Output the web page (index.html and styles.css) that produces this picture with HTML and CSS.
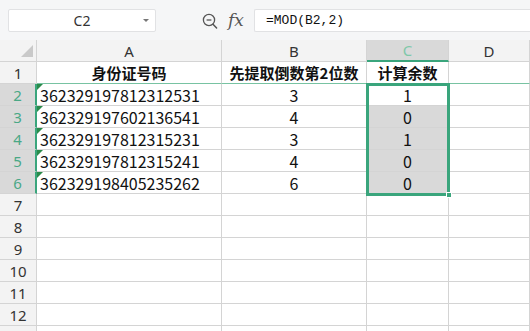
FILE: index.html
```html
<!DOCTYPE html>
<html lang="zh">
<head>
<meta charset="utf-8">
<link rel="stylesheet" href="styles.css">
</head>
<body>
<div class="toolbar">
  <div class="namebox"><span class="ref">C2</span><span class="caret"></span></div>
  <div class="tools">
    <svg class="zoom-icon" width="16" height="17" viewBox="0 0 16 17">
      <circle cx="7" cy="7" r="5.6" fill="none" stroke="#555" stroke-width="1.3"/>
      <line x1="4.6" y1="7" x2="9.4" y2="7" stroke="#555" stroke-width="1.3"/>
      <line x1="11" y1="11.2" x2="14.6" y2="15" stroke="#555" stroke-width="1.5" stroke-linecap="round"/>
    </svg>
    <span class="fx">fx</span>
  </div>
  <div class="formula">=MOD(B2,2)</div>
</div>
<div class="sheet">
  <div class="grid">
    <div class="corner"><span class="tri"></span></div>
    <div class="colh">A</div>
    <div class="colh">B</div>
    <div class="colh sel">C</div>
    <div class="colh">D</div>

    <div class="rowh">1</div>
    <div class="cell head r1">身份证号码</div>
    <div class="cell head r1">先提取倒数第2位数</div>
    <div class="cell head r1">计算余数</div>
    <div class="cell r1"></div>

    <div class="rowh sel">2</div>
    <div class="cell txt"><span class="flag"></span>362329197812312531</div>
    <div class="cell num">3</div>
    <div class="cell num">1</div>
    <div class="cell"></div>

    <div class="rowh sel">3</div>
    <div class="cell txt"><span class="flag"></span>362329197602136541</div>
    <div class="cell num">4</div>
    <div class="cell num shade">0</div>
    <div class="cell"></div>

    <div class="rowh sel">4</div>
    <div class="cell txt"><span class="flag"></span>362329197812315231</div>
    <div class="cell num">3</div>
    <div class="cell num shade">1</div>
    <div class="cell"></div>

    <div class="rowh sel">5</div>
    <div class="cell txt"><span class="flag"></span>362329197812315241</div>
    <div class="cell num">4</div>
    <div class="cell num shade">0</div>
    <div class="cell"></div>

    <div class="rowh sel">6</div>
    <div class="cell txt"><span class="flag"></span>362329198405235262</div>
    <div class="cell num">6</div>
    <div class="cell num shade">0</div>
    <div class="cell"></div>

    <div class="rowh">7</div><div class="cell"></div><div class="cell"></div><div class="cell"></div><div class="cell"></div>
    <div class="rowh">8</div><div class="cell"></div><div class="cell"></div><div class="cell"></div><div class="cell"></div>
    <div class="rowh">9</div><div class="cell"></div><div class="cell"></div><div class="cell"></div><div class="cell"></div>
    <div class="rowh">10</div><div class="cell"></div><div class="cell"></div><div class="cell"></div><div class="cell"></div>
    <div class="rowh">11</div><div class="cell"></div><div class="cell"></div><div class="cell"></div><div class="cell"></div>
    <div class="rowh">12</div><div class="cell"></div><div class="cell"></div><div class="cell"></div><div class="cell"></div>
    <div class="rowh"></div><div class="cell"></div><div class="cell"></div><div class="cell"></div><div class="cell"></div>
  </div>
  <div class="selection"><span class="handle"></span></div>
</div>
</body>
</html>
```
FILE: styles.css
```css
* { box-sizing: border-box; }
html, body { margin: 0; padding: 0; }
body {
  width: 530px;
  height: 331px;
  overflow: hidden;
  background: #ffffff;
  font-family: "Noto Sans CJK SC", "Noto Sans", sans-serif;
  color: #222;
}
.toolbar {
  height: 40px;
  background: #f5f6f7;
  display: flex;
  align-items: flex-start;
  padding-top: 9px;
  padding-left: 8px;
}
.namebox {
  width: 148px;
  height: 23px;
  background: #fff;
  border: 1px solid #e1e2e4;
  border-radius: 2px;
  display: flex;
  align-items: center;
}
.namebox .ref {
  flex: 1;
  text-align: center;
  font-size: 14px;
  color: #333;
  padding-left: 12px;
  font-family: "Noto Sans", sans-serif;
}
.caret {
  width: 0; height: 0;
  border-left: 3px solid transparent;
  border-right: 3px solid transparent;
  border-top: 3px solid #777;
  margin-right: 6px;
}
.tools {
  width: 98px;
  height: 23px;
  display: flex;
  align-items: center;
  padding-left: 46px;
  gap: 10px;
}
.zoom-icon { display: block; margin-top: 1px; }
.fx {
  font-family: "DejaVu Serif", "Liberation Serif", serif;
  font-style: italic;
  font-size: 17px;
  color: #555;
  line-height: 1;
}
.formula {
  flex: 1;
  height: 23px;
  background: #fff;
  border: 1px solid #e1e2e4;
  border-right: none;
  border-radius: 2px 0 0 2px;
  font-family: "Liberation Mono", monospace;
  font-size: 13px;
  line-height: 21px;
  padding-left: 11px;
  color: #111;
}
.sheet {
  position: relative;
  height: 291px;
  overflow: hidden;
}
.grid {
  display: grid;
  grid-template-columns: 37px 185px 145px 82px 81px;
  grid-template-rows: 22px repeat(13, 22px);
}
.corner {
  background: #f3f3f3;
  border-right: 1px solid #d4d4d4;
  border-bottom: 1px solid #d4d4d4;
  position: relative;
}
.tri {
  position: absolute;
  right: 3px;
  bottom: 4px;
  width: 0; height: 0;
  border-left: 12px solid transparent;
  border-bottom: 12px solid #c9c9c9;
}
.colh, .rowh {
  background: #f3f3f3;
  border-right: 1px solid #d4d4d4;
  border-bottom: 1px solid #d4d4d4;
  display: flex;
  align-items: center;
  justify-content: center;
  font-family: "Noto Sans", sans-serif;
  font-size: 15px;
  color: #333;
}
.colh.sel {
  background: #d9d9d9;
  color: #7fc8a9;
  border-bottom: 2px solid #3aa57c;
}
.rowh.sel {
  background: #d9d9d9;
  color: #4aa886;
  border-right: 2px solid #3aa57c;
}
.cell {
  border-right: 1px solid #d4d4d4;
  border-bottom: 1px solid #d4d4d4;
  display: flex;
  align-items: center;
  font-size: 15px;
  color: #111;
  position: relative;
}
.cell.r1 { border-bottom: 1px solid #78c3a2; }
.head {
  justify-content: center;
  font-weight: bold;
  font-size: 15px;
}
.txt {
  padding-left: 3px;
  font-size: 16px;
}
.num {
  justify-content: center;
  font-size: 16px;
}
.shade { background: #d9d9d9; }
.flag {
  position: absolute;
  left: 0;
  top: 0;
  width: 0; height: 0;
  border-top: 6px solid #2a8a4a;
  border-right: 6px solid transparent;
}
.selection {
  position: absolute;
  left: 366px;
  top: 43px;
  width: 84px;
  height: 113px;
  border: 3px solid #3aa57c;
  pointer-events: none;
}
.handle {
  position: absolute;
  right: -5px;
  bottom: -5px;
  width: 6px;
  height: 6px;
  background: #3aa57c;
  border: 1px solid #fff;
}
```
